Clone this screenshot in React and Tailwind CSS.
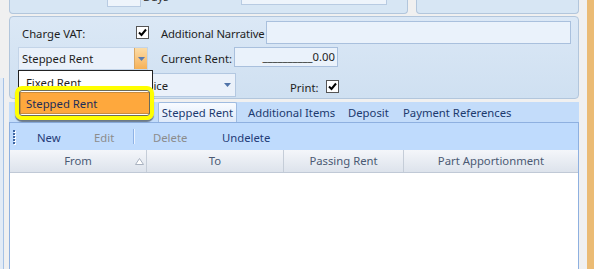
import React from 'react';

const font = "font-['Segoe_UI','Noto_Sans',sans-serif]";

const Check = () => (
  <div className="w-[13px] h-[13px] border border-[#555] bg-white flex items-center justify-center">
    <svg width="9" height="9" viewBox="0 0 9 9">
      <path d="M1 4.5 L3.5 7 L8 1.5" stroke="#000" strokeWidth="2" fill="none" />
    </svg>
  </div>
);

const Arrow = ({ color = '#4f73a8' }) => (
  <svg width="7" height="4" viewBox="0 0 7 4"><path d="M0 0 H7 L3.5 4 Z" fill={color} /></svg>
);

const App = () => {
  const tabs = ['Additional Items', 'Deposit', 'Payment References'];
  const cols = [
    { label: 'From', w: 'w-[137px]', sort: true },
    { label: 'To', w: 'w-[137px]' },
    { label: 'Passing Rent', w: 'w-[120px]' },
    { label: 'Part Apportionment', w: 'flex-1' },
  ];

  return (
    <div className={`relative w-[594px] h-[269px] bg-[#f0f0f0] overflow-hidden flex text-[11.3px] whitespace-nowrap text-[#1e1e1e] ${font}`}>
      {/* left splitter */}
      <div className="w-[9px] flex flex-col">
        <div className="h-[78px]" />
        <div className="flex-1 w-[4px] bg-[#e2ebf6] border-r border-[#a6c2e6]" />
      </div>

      <div className="w-[570px] flex flex-col">
        {/* top panels (cut off) */}
        <div className="flex gap-[8px] h-[14px]">
          <div className="w-[399px] h-[14px] bg-[#d7e6f4] border border-t-0 border-[#b2c6dc] rounded-b-[4px] flex items-start overflow-hidden">
            <div className="ml-[97px] w-[34px] h-[7px] bg-[#eef4fb] border border-t-0 border-[#b8cbe2]" />
            <span className="ml-[2px] -mt-[11px] leading-[15px] text-[#333]">Days</span>
            <div className="ml-[72px] w-[146px] h-[5px] bg-[#eef4fb] border border-t-0 border-[#b8cbe2]" />
          </div>
          <div className="w-[163px] h-[14px] bg-[#d7e6f4] border border-t-0 border-[#b2c6dc] rounded-b-[4px]" />
        </div>

        {/* main panel */}
        <div className="mt-[2px] h-[83px] bg-gradient-to-b from-[#dbe8f6] to-[#cfe0f1] border border-[#b2c6dc] rounded-[4px] pt-[4px] pl-[8px] flex flex-col gap-[3px]">
          <div className="flex items-center h-[23px]">
            <div className="w-[118px] pl-[4px] pt-[3px]">Charge VAT:</div>
            <Check />
            <div className="ml-[12px] w-[105px] pt-[3px] tracking-[-0.15px]">Additional Narrative</div>
            <div className="w-[305px] h-[23px] bg-[#eaf2fb] border border-[#a9c0dd]" />
          </div>
          <div className="flex items-start h-[23px]">
            <div className="w-[130px] h-[23px] bg-[#eaf1fa] border border-[#c3d4e8] flex items-center">
              <span className="flex-1 pl-[3px] pt-[2px]">Stepped Rent</span>
              <div className="w-[13px] h-full bg-gradient-to-b from-[#fbdca6] to-[#f6b156] border-l border-[#d9a866] flex items-center justify-center">
                <Arrow color="#5a7bb0" />
              </div>
            </div>
            <div className="ml-[13px] w-[73px] self-center pt-[2px]">Current Rent:</div>
            <div className="w-[104px] h-[20px] bg-[#eaf2fb] border border-[#a9c0dd] flex items-center justify-end pr-[2px]">
              __________0.00
            </div>
          </div>
          <div className="flex items-center h-[24px]">
            <div className="w-[218px] h-[24px] bg-[#eaf1fa] border border-[#b3c8e1] flex items-center">
              <span className="flex-1 pl-[111px] pt-[2px]">Invoice</span>
              <div className="w-[16px] flex justify-center"><Arrow /></div>
            </div>
            <div className="ml-[54px] w-[36px] pt-[7px]">Print:</div>
            <div className="pt-[3px]"><Check /></div>
          </div>
        </div>

        {/* tab strip */}
        <div className="mt-[3px] h-[20px] bg-[#c3dcfa] flex items-end text-[#1c3a6e]">
          <div className="ml-[149px] w-[79px] h-[20px] pt-[2px] bg-gradient-to-b from-[#f8fbff] to-[#dfeafa] border border-b-0 border-[#9fbbe0] rounded-t-[2px] flex items-center justify-center">
            Stepped Rent
          </div>
          <div className="flex h-[20px] items-center pt-[2px]">
            <span className="ml-[11px] w-[100px]">{tabs[0]}</span>
            <span className="w-[55px]">{tabs[1]}</span>
            <span>{tabs[2]}</span>
          </div>
        </div>

        {/* grid area */}
        <div className="flex-1 border border-[#8eb0e0] border-b-0 bg-white flex flex-col">
          <div className="h-[27px] bg-[#bfdbfd] flex items-center">
            <div className="ml-[3px] flex flex-col gap-[1px]">
              {[0, 1, 2, 3, 4].map(i => (
                <div key={i} className="w-[2px] h-[2px] bg-[#3f66a3] shadow-[1px_1px_0_#fff]" />
              ))}
            </div>
            <span className="ml-[22px] w-[57px] pt-[3px] text-[#1f3c78]">New</span>
            <span className="w-[39px] pt-[3px] text-[#8c8c8c]">Edit</span>
            <div className="w-[1px] h-[15px] bg-[#8fb3e6] shadow-[1px_0_0_#e8f2ff]" />
            <span className="ml-[19px] w-[69px] pt-[3px] text-[#8c8c8c]">Delete</span>
            <span className="pt-[3px] text-[#1f3c78]">Undelete</span>
          </div>
          <div className="h-[23px] bg-gradient-to-b from-[#f4f6fa] to-[#dde3ec] border-b border-[#c0c9d6] flex text-[#4b5a73]">
            {cols.map((c, i) => (
              <div key={c.label} className={`${c.w} relative flex items-center justify-center ${i < 3 ? 'border-r border-[#c5cdd8]' : ''}`}>
                {c.label}
                {c.sort && (
                  <svg className="absolute right-[2px] top-[8px]" width="9" height="7" viewBox="0 0 9 7">
                    <path d="M4.5 0.5 L8.5 6.5 H0.5 Z" fill="#fff" stroke="#a9b2c0" />
                  </svg>
                )}
              </div>
            ))}
          </div>
          <div className="flex-1 bg-white" />
        </div>
      </div>

      <div className="w-[8px]" />
      <div className="w-[7px] bg-[#ebbb74]" />

      {/* open dropdown list */}
      <div className="absolute left-[18px] top-[70px] w-[135px] h-[47px] bg-white border border-[#222] pt-[1px] px-[1px]">
        <div className="h-[20px] pl-[6px] pt-[2px] flex items-center">Fixed Rent</div>
        <div className="h-[22px] bg-[#fea83d] border border-[#c88b3e] pl-[5px] pt-[2px] flex items-center text-[#1c2d5a]">Stepped Rent</div>
      </div>

      {/* yellow highlight annotation */}
      <div className="absolute left-[15px] top-[86px] w-[139px] h-[34px] border-[4px] border-[#ffff00] rounded-[7px] shadow-[inset_0_0_0_1px_#6b6b5a,0_2px_1px_rgba(0,0,0,0.45)]" />
    </div>
  );
};

export default App;
